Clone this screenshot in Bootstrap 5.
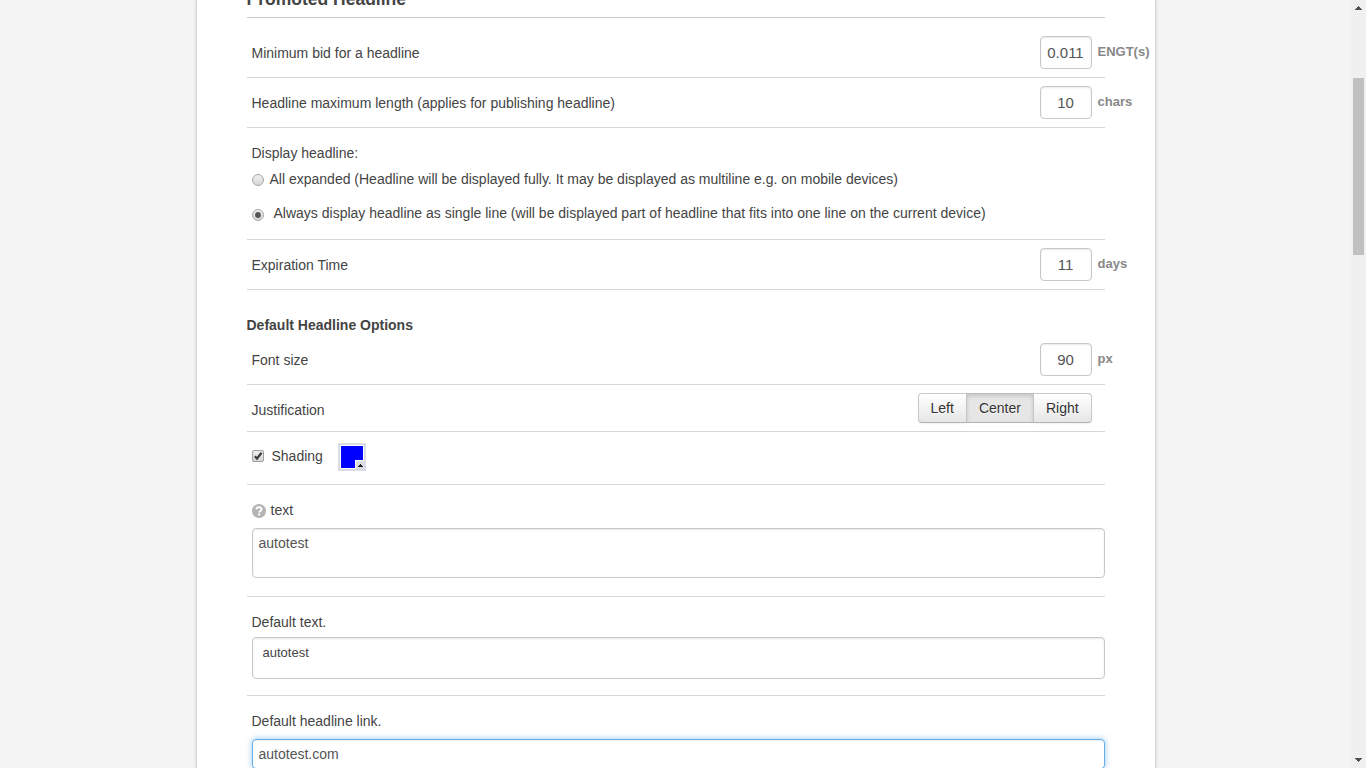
<!DOCTYPE html>
<html lang="en">
<head>
<meta charset="utf-8">
<meta name="viewport" content="width=device-width, initial-scale=1">
<title>Promoted Headline</title>
<link href="https://cdn.jsdelivr.net/npm/bootstrap@5.3.0/dist/css/bootstrap.min.css" rel="stylesheet">
<style>
body{font-family:"Liberation Sans",Arial,sans-serif;font-size:14px;line-height:20px;color:#444;background:#f4f4f4;height:768px}
.panel{width:960px;height:768px;border:solid #d8d8d8;border-width:0 1px;box-shadow:0 0 3px rgba(0,0,0,.16);padding:0 50px}
.opt{border-bottom:1px solid #d6d6d6;padding-left:5px}
.page-title{height:18px;border-bottom:1px solid #c8c8c8;font-size:17.5px;line-height:20px;font-weight:700;margin:0}
.page-title span{margin-top:-11px}
.sub-title{font-size:14px;line-height:20px;font-weight:700;margin:0;padding-top:25px;height:45px}
.h50{height:50px;padding-top:8px}
.h60{height:60px;padding-top:18px}
.opt-label{padding-top:7px}
.form-control{border:1px solid #c8c8c8;border-radius:4px;box-shadow:inset 0 1px 2px rgba(0,0,0,.09);color:#555;font-size:14px;line-height:20px;padding:4px 6px;background:#fff}
.num{width:52px;height:33px;font-size:15px;text-align:center;padding:4px 1px 4px 0}
.unit{width:70px;margin-right:-57.5px;padding-left:5.5px;padding-top:6px;font-size:13px;line-height:20px;font-weight:700;color:#888;white-space:nowrap}
textarea.form-control{resize:none;min-height:0;overflow:hidden}
textarea.area-main{height:50px}
textarea.area-default{height:42px;padding:5px 10px;font-size:13px;color:#444}
.form-control.active-field{height:30px;border-color:#66afe9;box-shadow:inset 0 1px 1px rgba(0,0,0,.075),0 0 6px rgba(102,175,233,.7)}
.btn-just{--bs-btn-font-size:14px;--bs-btn-line-height:20px;--bs-btn-padding-y:4px;--bs-btn-padding-x:12px;color:#333;border:1px solid #c8c8c8;border-bottom-color:#b0b0b0;background:linear-gradient(#fff,#e6e6e6);border-radius:4px;box-shadow:0 1px 2px rgba(0,0,0,.05);text-shadow:0 1px 1px rgba(255,255,255,.75)}
.btn-just.active{color:#333;background:#e6e6e6;border-color:#bbb #c4c4c4 #b0b0b0;box-shadow:inset 0 2px 4px rgba(0,0,0,.15)}
.ico{display:block;flex:none}
.scroll-rail{width:15px;height:768px;background:#f0f0f0;padding:6px 2px}
.scroll-thumb{width:11px;height:177px;background:#c0c0c0;margin-top:68px}
</style>
</head>
<body class="d-flex overflow-hidden">
<main class="flex-grow-1">
<div class="panel mx-auto bg-white">
  <h1 class="page-title d-flex align-items-start"><span>Promoted Headline</span></h1>

  <div class="opt h60 d-flex align-items-start">
    <label class="opt-label me-auto" for="bid">Minimum bid for a headline</label>
    <input id="bid" class="form-control num" value="0.011"><span class="unit">ENGT(s)</span>
  </div>
  <div class="opt h50 d-flex align-items-start">
    <label class="opt-label me-auto" for="max">Headline maximum length (applies for publishing headline)</label>
    <input id="max" class="form-control num" value="10"><span class="unit">chars</span>
  </div>

  <div class="opt" style="height:112px;padding-top:15px">
    <div>Display headline:</div>
    <div class="d-flex" style="padding-top:6px">
      <svg class="ico" width="14" height="14" viewBox="0 0 14 14" style="margin-top:4px"><defs><linearGradient id="g" x2="0" y2="1"><stop stop-color="#f0f0f0"/><stop offset="1" stop-color="#d6d6d6"/></linearGradient></defs><circle cx="6" cy="7" r="5.5" fill="url(#g)" stroke="#a8a8a8"/></svg>
      <span style="margin-left:4px">All expanded (Headline will be displayed fully. It may be displayed as multiline e.g. on mobile devices)</span>
    </div>
    <div class="d-flex" style="padding-top:14px">
      <svg class="ico" width="14" height="14" viewBox="0 0 14 14" style="margin-top:5px"><circle cx="6" cy="7" r="5.5" fill="url(#g)" stroke="#a8a8a8"/><circle cx="6" cy="7" r="2.9" fill="#555"/></svg>
      <span style="margin-left:8px">Always display headline as single line (will be displayed part of headline that fits into one line on the current device)</span>
    </div>
  </div>

  <div class="opt h50 d-flex align-items-start">
    <label class="opt-label me-auto" for="exp">Expiration Time</label>
    <input id="exp" class="form-control num" value="11"><span class="unit">days</span>
  </div>

  <h2 class="sub-title">Default Headline Options</h2>
  <div class="opt h50 d-flex align-items-start">
    <label class="opt-label me-auto" for="size">Font size</label>
    <input id="size" class="form-control num" value="90"><span class="unit">px</span>
  </div>

  <div class="opt d-flex align-items-start justify-content-between" style="height:47px;padding-top:8px">
    <span class="opt-label">Justification</span>
    <div class="btn-group" style="margin-right:12.9px">
      <button class="btn btn-just" type="button">Left</button>
      <button class="btn btn-just active" type="button">Center</button>
      <button class="btn btn-just" type="button">Right</button>
    </div>
  </div>

  <div class="opt d-flex align-items-start" style="height:53px;padding-top:11px">
    <svg class="ico" width="13" height="13" viewBox="0 0 13 13" style="margin-top:7px"><rect x=".5" y=".5" width="11" height="11" rx="1.5" fill="url(#g)" stroke="#a0a0a0"/><path d="M2.8 6.2 5 8.5 9.6 2.8" fill="none" stroke="#3c3c3c" stroke-width="2.2"/></svg>
    <span style="margin-left:7px;padding-top:3px">Shading</span>
    <svg class="ico" width="28" height="28" viewBox="0 0 28 28" style="margin-left:15px" shape-rendering="crispEdges"><rect width="28" height="28" rx="1.5" fill="#dadde3"/><rect x="2" y="2" width="24" height="24" fill="#fff"/><path d="M3 3h22v22H3z" fill="#00f"/><path d="M17 17h9v9h-9z" fill="#fff"/><path d="M18 18h9v9h-9z" fill="#dadde3"/><path d="M22 21h1v1h1v1h1v1h-5v-1h1v-1h1z" fill="#222"/></svg>
  </div>

  <div class="opt" style="height:112px;padding-top:15px">
    <div class="d-flex">
      <svg class="ico" width="14" height="14" viewBox="0 0 14 14" style="margin-top:4px"><circle cx="7" cy="7" r="7" fill="#b4b4b4"/><path d="M4.4 5.4C4.5 3.9 5.5 3.2 7 3.2s2.6.8 2.6 2.1c0 1.6-2.3 1.6-2.4 3.1" fill="none" stroke="#fff" stroke-width="1.9"/><path d="M6.1 9.4h2.1v2H6.1z" fill="#fff"/></svg>
      <label for="text" style="margin-left:5px">text</label>
    </div>
    <textarea id="text" class="form-control area-main" style="margin-top:8px">autotest</textarea>
  </div>

  <div class="opt" style="height:99px;padding-top:15px">
    <label class="d-block" for="deftext">Default text.</label>
    <textarea id="deftext" class="form-control area-default" style="margin-top:5px">autotest</textarea>
  </div>

  <div style="padding:15px 0 0 5px">
    <label class="d-block" for="link">Default headline link.</label>
    <input id="link" class="form-control active-field" style="margin-top:8px" value="autotest.com">
  </div>
</div>
</main>
<aside class="scroll-rail d-flex flex-column align-items-center flex-shrink-0">
  <svg class="ico" width="7" height="4" viewBox="0 0 7 4" shape-rendering="crispEdges"><path d="M3 0h1v1h1v1h1v1h1v1H0V3h1V2h1V1h1z" fill="#505050"/></svg>
  <div class="scroll-thumb"></div>
  <svg class="ico mt-auto" width="7" height="4" viewBox="0 0 7 4" shape-rendering="crispEdges"><path d="M0 0h7v1H6v1H5v1H4v1H3V3H2V2H1V1H0z" fill="#505050"/></svg>
</aside>
<script src="https://cdn.jsdelivr.net/npm/bootstrap@5.3.0/dist/js/bootstrap.bundle.min.js"></script>
</body>
</html>
